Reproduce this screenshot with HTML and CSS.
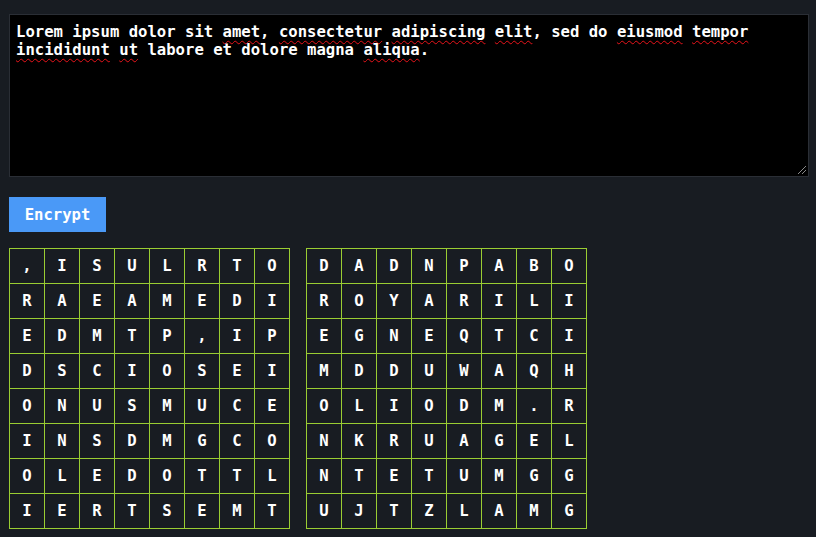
FILE: index.html
```html
<!DOCTYPE html>
<html lang="en">
<head>
<meta charset="utf-8">
<title>Cipher</title>
<link rel="stylesheet" href="styles.css">
</head>
<body>
<main class="app">
  <div class="input" role="textbox" aria-multiline="true" contenteditable="true" spellcheck="false">Lorem ipsum dolor sit <span class="sp">amet</span>, <span class="sp">consectetur</span> <span class="sp">adipiscing</span> <span class="sp">elit</span>, sed do <span class="sp">eiusmod</span> <span class="sp">tempor</span> <span class="sp">incididunt</span> <span class="sp">ut</span> labore et dolore magna <span class="sp">aliqua</span>.<span class="grip"></span></div>
  <div class="actions"><button class="btn" type="button">Encrypt</button></div>
  <div class="grids">
    <table class="grid">
      <tr><td>,</td><td>I</td><td>S</td><td>U</td><td>L</td><td>R</td><td>T</td><td>O</td></tr>
      <tr><td>R</td><td>A</td><td>E</td><td>A</td><td>M</td><td>E</td><td>D</td><td>I</td></tr>
      <tr><td>E</td><td>D</td><td>M</td><td>T</td><td>P</td><td>,</td><td>I</td><td>P</td></tr>
      <tr><td>D</td><td>S</td><td>C</td><td>I</td><td>O</td><td>S</td><td>E</td><td>I</td></tr>
      <tr><td>O</td><td>N</td><td>U</td><td>S</td><td>M</td><td>U</td><td>C</td><td>E</td></tr>
      <tr><td>I</td><td>N</td><td>S</td><td>D</td><td>M</td><td>G</td><td>C</td><td>O</td></tr>
      <tr><td>O</td><td>L</td><td>E</td><td>D</td><td>O</td><td>T</td><td>T</td><td>L</td></tr>
      <tr><td>I</td><td>E</td><td>R</td><td>T</td><td>S</td><td>E</td><td>M</td><td>T</td></tr>
    </table>
    <table class="grid">
      <tr><td>D</td><td>A</td><td>D</td><td>N</td><td>P</td><td>A</td><td>B</td><td>O</td></tr>
      <tr><td>R</td><td>O</td><td>Y</td><td>A</td><td>R</td><td>I</td><td>L</td><td>I</td></tr>
      <tr><td>E</td><td>G</td><td>N</td><td>E</td><td>Q</td><td>T</td><td>C</td><td>I</td></tr>
      <tr><td>M</td><td>D</td><td>D</td><td>U</td><td>W</td><td>A</td><td>Q</td><td>H</td></tr>
      <tr><td>O</td><td>L</td><td>I</td><td>O</td><td>D</td><td>M</td><td>.</td><td>R</td></tr>
      <tr><td>N</td><td>K</td><td>R</td><td>U</td><td>A</td><td>G</td><td>E</td><td>L</td></tr>
      <tr><td>N</td><td>T</td><td>E</td><td>T</td><td>U</td><td>M</td><td>G</td><td>G</td></tr>
      <tr><td>U</td><td>J</td><td>T</td><td>Z</td><td>L</td><td>A</td><td>M</td><td>G</td></tr>
    </table>
  </div>
</main>
</body>
</html>
```
FILE: styles.css
```css
html, body {
  margin: 0;
  padding: 0;
  background: #181c22;
  color: #ffffff;
  font-family: "DejaVu Sans Mono", "Liberation Mono", monospace;
}

.app {
  padding: 14px 9px 0 9px;
  display: flex;
  flex-direction: column;
}

.input {
  position: relative;
  box-sizing: border-box;
  width: 800px;
  height: 163px;
  background: #000000;
  border: 1px solid #2a2e35;
  padding: 8px 6px;
  font-family: "DejaVu Sans Mono", "Liberation Mono", monospace;
  font-weight: bold;
  font-size: 15.6px;
  line-height: 18px;
  color: #ffffff;
  outline: none;
  white-space: pre-wrap;
}

.sp {
  text-decoration: underline wavy #e8141a;
  text-decoration-thickness: 1.1px;
  text-underline-offset: 3px;
}

.grip {
  position: absolute;
  right: 2px;
  bottom: 2px;
  width: 8px;
  height: 8px;
  background:
    linear-gradient(135deg, transparent 45%, #8a8a8a 45%, #8a8a8a 55%, transparent 55%) no-repeat,
    linear-gradient(135deg, transparent 45%, #8a8a8a 45%, #8a8a8a 55%, transparent 55%) no-repeat;
  background-size: 8px 8px, 4px 4px;
  background-position: 0 0, 4px 4px;
}

.actions {
  margin-top: 20px;
  display: flex;
}

.btn {
  width: 97px;
  height: 35px;
  border: none;
  background: #4a99f7;
  color: #ffffff;
  font-family: "DejaVu Sans Mono", "Liberation Mono", monospace;
  font-weight: bold;
  font-size: 15.6px;
  padding: 0;
  cursor: pointer;
}

.grids {
  margin-top: 16px;
  display: flex;
  gap: 16px;
}

.grid {
  border-collapse: collapse;
  border: 1px solid #9acd32;
}

.grid td {
  border: 1px solid #9acd32;
  width: 35px;
  height: 35px;
  padding: 0;
  box-sizing: border-box;
  text-align: center;
  vertical-align: middle;
  font-family: "DejaVu Sans Mono", "Liberation Mono", monospace;
  font-weight: bold;
  font-size: 15.6px;
  color: #ffffff;
}
```
